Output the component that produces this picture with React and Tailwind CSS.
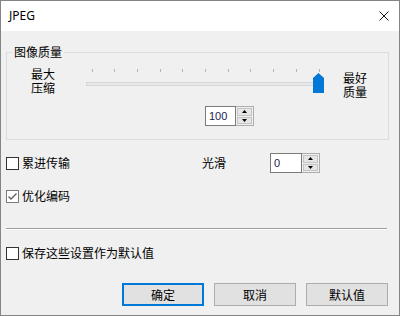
const cjk = { fontFamily: '"Noto Sans CJK SC", "Noto Sans", sans-serif' };

function Checkbox({ checked, label }) {
  return (
    <div className="flex items-center">
      <span
        className={`flex h-[13px] w-[13px] items-center justify-center border bg-white ${
          checked ? "border-[#7a7a7a]" : "border-[#333333]"
        }`}
      >
        {checked && (
          <svg width="11" height="11" viewBox="0 0 11 11">
            <polyline points="1.5,5.5 4,8 9.5,2.5" fill="none" stroke="#606060" strokeWidth="1.4" />
          </svg>
        )}
      </span>
      <span className="ml-[3px] text-[12px] leading-[14px] text-black">{label}</span>
    </div>
  );
}

function SpinBox({ value, textWidth }) {
  return (
    <div className="flex h-[20px]">
      <div
        className={`flex h-full items-center border border-[#7a7a7a] bg-white pl-[3px] text-[11px] text-[#1a1a50] ${textWidth}`}
        style={{ fontFamily: '"Liberation Sans", sans-serif' }}
      >
        {value}
      </div>
      <div className="flex h-full w-[18px] flex-col gap-[1px] border border-l-0 border-[#adadad] bg-[#f0f0f0] p-[1px]">
        <div className="flex flex-1 items-center justify-center border border-[#c4c4c4] bg-[#e5e5e5]">
          <svg width="5" height="3" viewBox="0 0 5 3">
            <polygon points="0,3 2.5,0 5,3" fill="#000" />
          </svg>
        </div>
        <div className="flex flex-1 items-center justify-center border border-[#c4c4c4] bg-[#e5e5e5]">
          <svg width="5" height="3" viewBox="0 0 5 3">
            <polygon points="0,0 5,0 2.5,3" fill="#000" />
          </svg>
        </div>
      </div>
    </div>
  );
}

function Slider() {
  const ticks = Array.from({ length: 11 }, (_, i) => 5.5 + i * 22.7);
  return (
    <svg width="240" height="26" viewBox="0 0 240 26" className="mt-[1px] shrink-0">
      {ticks.map((x, i) => (
        <line key={i} x1={Math.round(x) + 0.5} y1="1" x2={Math.round(x) + 0.5} y2="4" stroke="#b4b4b4" />
      ))}
      <rect x="0.5" y="14.5" width="236" height="3" fill="#e7eaea" stroke="#d6d6d6" />
      <polygon points="227,10 232.5,5 238,10 238,25 227,25" fill="#0078d7" />
    </svg>
  );
}

function Button({ children, primary }) {
  return (
    <button
      type="button"
      className={`flex h-[23px] w-[82px] items-center justify-center bg-[#e1e1e1] text-[12px] text-black ${
        primary ? "border-2 border-[#0078d7]" : "border border-[#adadad]"
      }`}
    >
      {children}
    </button>
  );
}

export default function App() {
  return (
    <div className="flex h-[316px] w-[400px] flex-col border border-[#858585] bg-[#f0f0f0]" style={cjk}>
      <div className="flex h-[30px] shrink-0 items-center justify-between bg-white pl-[8px] pr-[10px]">
        <span className="text-[12px] text-black" style={{ fontFamily: '"Noto Sans", sans-serif' }}>
          JPEG
        </span>
        <svg width="10" height="10" viewBox="0 0 10 10">
          <path d="M0.5 0.5 L9.5 9.5 M9.5 0.5 L0.5 9.5" stroke="#1a1a1a" strokeWidth="1" />
        </svg>
      </div>

      <div className="flex flex-col pl-[5px]">
        <div className="relative mt-[21px] h-[88px] w-[383px] border border-[#dcdcdc]">
          <span className="absolute left-[5px] top-[-9px] bg-[#f0f0f0] px-[2px] text-[12px] leading-[16px] text-black">
            图像质量
          </span>
          <div className="flex items-start pt-[14px]">
            <div className="ml-[24px] w-[24px] text-[12px] leading-[14px] text-black">
              <div>最大</div>
              <div>压缩</div>
            </div>
            <div className="ml-[31px]">
              <Slider />
            </div>
            <div className="ml-[17px] mt-[4px] w-[24px] text-[12px] leading-[14px] text-black">
              <div>最好</div>
              <div>质量</div>
            </div>
          </div>
          <div className="ml-[198px] mt-[7px]">
            <SpinBox value="100" textWidth="w-[31px]" />
          </div>
        </div>

        <div className="mt-[13px] flex h-[20px] items-center">
          <div className="w-[196px]">
            <Checkbox label="累进传输" />
          </div>
          <span className="w-[24px] text-[12px] leading-[14px] text-black">光滑</span>
          <div className="ml-[44px]">
            <SpinBox value="0" textWidth="w-[32px]" />
          </div>
        </div>

        <div className="mt-[16px] flex h-[14px] items-center">
          <Checkbox checked label="优化编码" />
        </div>

        <div className="mt-[25px] w-[381px] border-t border-b border-t-[#a0a0a0] border-b-white" />

        <div className="mt-[16px] flex h-[14px] items-center">
          <Checkbox label="保存这些设置作为默认值" />
        </div>

        <div className="mt-[23px] flex gap-[10px] pl-[116px]">
          <Button primary>确定</Button>
          <Button>取消</Button>
          <Button>默认值</Button>
        </div>
      </div>
    </div>
  );
}
